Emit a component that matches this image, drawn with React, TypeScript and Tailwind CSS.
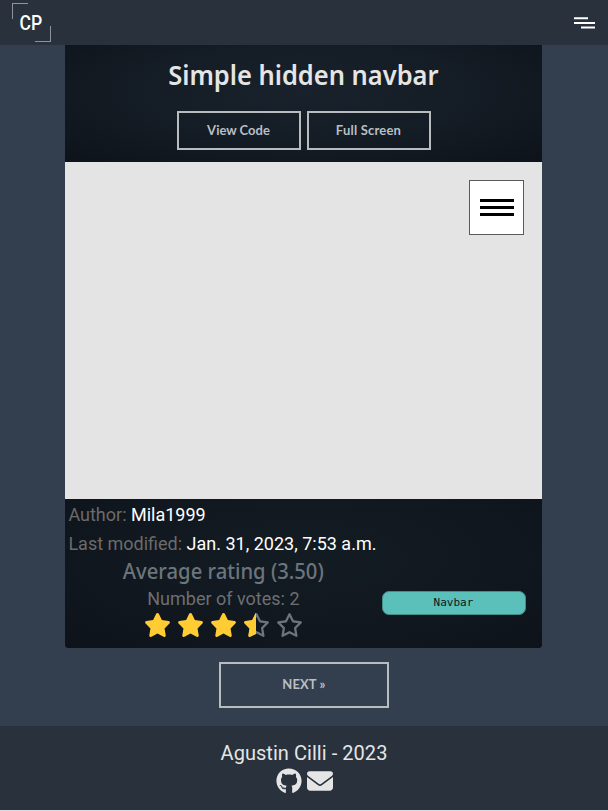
import React from "react";
import { FaStar, FaRegStar, FaGithub, FaEnvelope } from "react-icons/fa6";

const heading = "font-['Noto_Sans','Open_Sans',sans-serif]";
const button =
  "flex items-center justify-center border-2 border-[#b9bcbe] font-['Lato',sans-serif] font-bold text-[#b9bfc3] whitespace-nowrap";

function Logo() {
  return (
    <div className="relative flex h-[39px] w-[39px] items-center justify-center">
      <span className="absolute left-0 top-0 h-4 w-4 border-l border-t border-[#8e949a]" />
      <span className="absolute bottom-0 right-0 h-4 w-4 border-b border-r border-[#8e949a]" />
      <span className="mr-[1px] mt-px inline-block origin-center scale-x-[0.88] text-[20px] font-medium leading-none text-white">
        CP
      </span>
    </div>
  );
}

function Stars() {
  return (
    <div className="mt-[1px] flex gap-[6px] text-[24px] text-[#ffcc33]">
      {[0, 1, 2].map((i) => (
        <FaStar key={i} className="w-[27px]" />
      ))}
      <div className="relative h-6 w-[27px] text-[#6c757d]">
        <FaRegStar className="w-[27px]" />
        <div className="absolute left-0 top-0 h-6 w-[13.5px] overflow-hidden text-[#ffcc33]">
          <FaStar className="w-[27px] max-w-none" />
        </div>
      </div>
      <FaRegStar className="w-[27px] text-[#6c757d]" />
    </div>
  );
}

export default function App() {
  return (
    <div className="flex h-[811px] w-[608px] flex-col overflow-hidden bg-[#333e4e] font-['Roboto',sans-serif]">
      <header className="flex h-[45px] shrink-0 justify-between bg-[#28313c] pl-[12px] pr-[13px] pt-[3px]">
        <Logo />
        <svg className="mt-[14px]" width="21" height="12" fill="#fff">
          <path d="M0 .2h14v2H0zM0 5h21v2H0zM7 9.5h14v2H7z" />
        </svg>
      </header>

      <main className="ml-[65px] h-[603px] w-[477px] shrink-0 overflow-hidden rounded-b-[4px] bg-[#0e131a]">
        <section className="h-[117px] bg-[radial-gradient(ellipse_at_50%_40%,#19222c_0%,#141c25_50%,#0e131a_100%)] pt-[12px]">
          <h1 className={`${heading} flex justify-center text-[27px] font-semibold leading-[36px] text-[#e5e5e5]`}>
            <span className="inline-block scale-x-[0.943] whitespace-nowrap">Simple hidden navbar</span>
          </h1>
          <div className="mt-[18px] flex justify-center gap-[6px] text-[13px]">
            <button className={`${button} h-[39px] w-[124px]`}>View Code</button>
            <button className={`${button} h-[39px] w-[124px] tracking-[0.2px]`}>Full Screen</button>
          </div>
        </section>

        <section className="flex h-[337px] justify-end bg-[#e4e4e4] pr-[18px] pt-[18px]">
          <div className="flex h-[55px] w-[55px] flex-col items-center justify-center gap-[4px] border border-[#5a5a5a] bg-white">
            <i className="h-[3px] w-[34px] bg-black" />
            <i className="h-[3px] w-[34px] bg-black" />
            <i className="h-[3px] w-[34px] bg-black" />
          </div>
        </section>

        <section className="h-[149px] bg-[radial-gradient(ellipse_at_50%_40%,#141c23_0%,#11181f_50%,#0e131a_100%)] pl-[3.4px] text-[18px] text-[#6b6b6b]">
          <p className="h-[29px] leading-[32px]">
            Author: <span className="text-white">Mila1999</span>
          </p>
          <p className="h-[29px] leading-[32px]">
            Last modified: <span className="text-white">Jan. 31, 2023, 7:53 a.m.</span>
          </p>
          <div className="flex">
            <div className="flex w-[310px] flex-col items-center text-[#6c6f73]">
              <h2 className={`${heading} scale-x-[0.963] whitespace-nowrap text-[21px] font-medium leading-[28px] text-[#6c757d]`}>
                Average rating (3.50)
              </h2>
              <p className="leading-[27px]">Number of votes: 2</p>
              <Stars />
            </div>
            <div className="ml-[4px] mt-[34px] flex h-[24px] w-[144px] items-center justify-center rounded-[7px] border border-[#438e89] bg-[#5bbfba] pr-[2px] pt-px font-['DejaVu_Sans_Mono',monospace] text-[11px] text-[#0b171b]">
              Navbar
            </div>
          </div>
        </section>
      </main>

      <div className="flex h-[78px] shrink-0 justify-center pt-[14px]">
        <button className={`${button} h-[46px] w-[170px] text-[13px] tracking-[0.1px]`}>NEXT »</button>
      </div>

      <footer className="flex h-[84px] shrink-0 flex-col items-center bg-[#28313c] pt-[13px] text-[#e5e5e5]">
        <p className="text-[20px] leading-[29px] tracking-[0.05px]">Agustin Cilli - 2023</p>
        <div className="flex items-center gap-[5px] text-[26px]">
          <FaGithub />
          <FaEnvelope />
        </div>
      </footer>
      <div className="h-px shrink-0 bg-[#dedee2]" />
    </div>
  );
}
